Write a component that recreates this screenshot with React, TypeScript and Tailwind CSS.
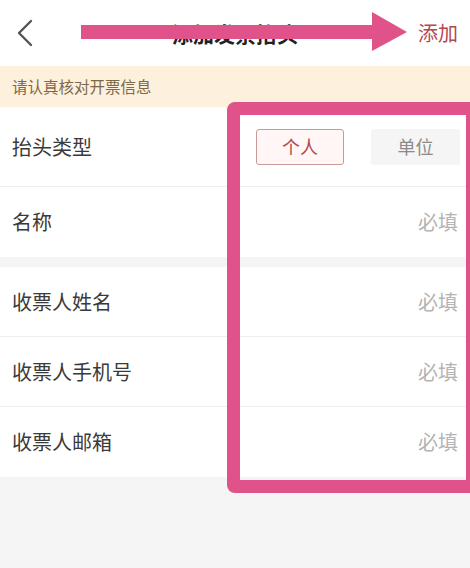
import React from "react";

function Row({ label, last }: { label: string; last?: boolean }) {
  return (
    <div className={`h-[70px] bg-white flex items-center justify-between pl-[12px] pr-[12px] ${last ? "" : "border-b border-[#eeeeee]"}`}>
      <span className="text-[20px] text-[#3a3a3a]">{label}</span>
      <span className="text-[20px] text-[#b3b3b3]">必填</span>
    </div>
  );
}

export default function App() {
  return (
    <div className="relative w-[470px] h-[568px] overflow-hidden bg-[#f5f5f5] font-['Noto_Sans_CJK_SC','Noto_Sans',sans-serif]">
      {/* header */}
      <div className="relative h-[66px] bg-white flex items-center justify-between pl-[12px] pr-[12px]">
        <svg width="22" height="30" viewBox="0 0 22 30" className="ml-[2px]">
          <path d="M17 3 L5 15 L17 27" fill="none" stroke="#555555" strokeWidth="2.4" strokeLinecap="round" strokeLinejoin="round" />
        </svg>
        <span className="absolute left-0 right-0 text-center top-[17px] text-[21px] font-bold text-[#222222] leading-[32px] pointer-events-none">添加发票抬头</span>
        <span className="text-[20px] text-[#b4474e] leading-[30px]">添加</span>
      </div>
      {/* banner */}
      <div className="h-[41px] bg-[#fdf0dc] flex items-center pl-[12px] text-[15.5px] text-[#7d6849]">请认真核对开票信息</div>
      {/* row 1 */}
      <div className="h-[80px] bg-white flex items-center justify-between pl-[12px] pr-[10px] border-b border-[#eeeeee]">
        <span className="text-[20px] text-[#3a3a3a]">抬头类型</span>
        <div className="flex items-center gap-[27px]">
          <div className="w-[88px] h-[36px] flex items-center justify-center rounded-[3px] border border-[#c9999a] bg-[#fff6f5] text-[18px] text-[#b24a4e]">个人</div>
          <div className="w-[89px] h-[36px] flex items-center justify-center rounded-[3px] bg-[#f5f5f5] text-[18px] text-[#8a8a8a]">单位</div>
        </div>
      </div>
      <Row label="名称" last />
      <div className="h-[10px]" />
      <Row label="收票人姓名" />
      <Row label="收票人手机号" />
      <Row label="收票人邮箱" last />

      {/* annotation: arrow */}
      <svg className="absolute left-0 top-0" width="470" height="66" viewBox="0 0 470 66">
        <rect x="81" y="25" width="293" height="14" fill="#e0528a" />
        <polygon points="372,12 407,32 372,51" fill="#e0528a" />
      </svg>
      {/* annotation: box */}
      <div className="absolute left-[227px] top-[102px] w-[252px] h-[391px] border-[13px] border-[#e0528a] rounded-[8px]" />
    </div>
  );
}
